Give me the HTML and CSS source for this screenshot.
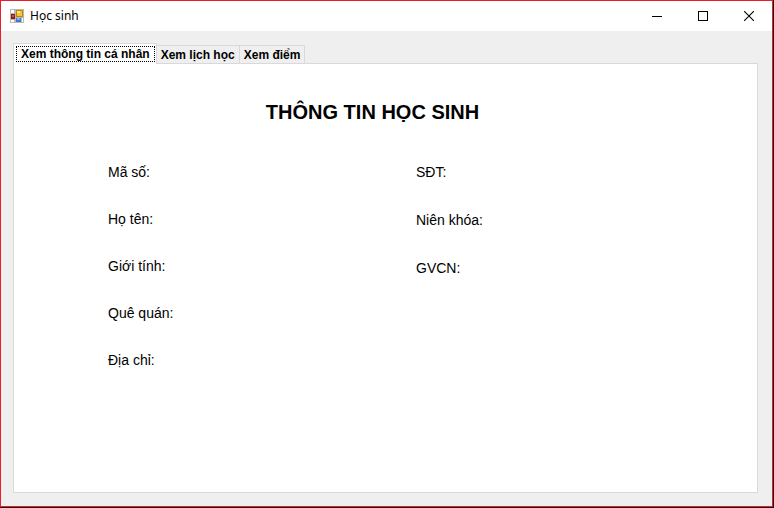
FILE: index.html
```html
<!DOCTYPE html>
<html lang="vi">
<head>
<meta charset="utf-8">
<title>Học sinh</title>
<link rel="stylesheet" href="styles.css">
</head>
<body>
<div class="window">
  <header class="titlebar">
    <svg class="app-icon" width="14" height="14" viewBox="0 0 14 14" shape-rendering="crispEdges" aria-hidden="true">
      <path fill="#b8b8b8" d="M0 0h14v14H0z"/>
      <path fill="#fff" d="M1 1h3v3H1zM1 11h3v2H1zM12 9h1v4h-1z"/>
      <path fill="#8f1c12" d="M1 5h4v5H1z"/>
      <path fill="#d8503c" d="M2 6h2v2H2z"/>
      <path fill="#b8860b" d="M6 1h7v7H6z"/>
      <path fill="#f7c52e" d="M7 2h5v5H7z"/>
      <path fill="#fde58a" d="M7 2h3v2H7z"/>
      <path fill="#3f78d0" d="M6 9h5v4H6z"/>
      <path fill="#7fb0f0" d="M7 9h3v2H7z"/>
    </svg>
    <h1 class="title">Học sinh</h1>
    <div class="controls">
      <button class="control" type="button" aria-label="Thu nhỏ">
        <svg width="10" height="10" viewBox="0 0 10 10" shape-rendering="crispEdges"><path d="M0 5h10v1H0z"/></svg>
      </button>
      <button class="control" type="button" aria-label="Phóng to">
        <svg width="10" height="10" viewBox="0 0 10 10" shape-rendering="crispEdges"><path fill-rule="evenodd" d="M0 0h10v10H0zM1 1v8h8V1z"/></svg>
      </button>
      <button class="control" type="button" aria-label="Đóng">
        <svg width="10" height="10" viewBox="0 0 10 10"><path d="M0 0l10 10M10 0L0 10" stroke="#000" stroke-width="1.1"/></svg>
      </button>
    </div>
  </header>
  <main class="client">
    <div class="tabs" role="tablist">
      <button class="tab tab-active" type="button" role="tab" aria-selected="true"><span class="focus">Xem thông tin cá nhân</span></button>
      <button class="tab" type="button" role="tab" aria-selected="false">Xem lịch học</button>
      <button class="tab" type="button" role="tab" aria-selected="false">Xem điểm</button>
    </div>
    <section class="panel" role="tabpanel">
      <h2 class="heading">THÔNG TIN HỌC SINH</h2>
      <div class="fields">
        <div class="column">
          <span>Mã số:</span>
          <span>Họ tên:</span>
          <span>Giới tính:</span>
          <span>Quê quán:</span>
          <span>Địa chỉ:</span>
        </div>
        <div class="column column-right">
          <span>SĐT:</span>
          <span>Niên khóa:</span>
          <span>GVCN:</span>
        </div>
      </div>
    </section>
  </main>
</div>
</body>
</html>
```
FILE: styles.css
```css
* {
  box-sizing: border-box;
}

body {
  margin: 0;
  padding: 0 1px 1px 0;
  height: 100vh;
  background: #1c1216;
  color: #000;
  font-family: "Liberation Sans", Arial, sans-serif;
}

.window {
  display: flex;
  flex-direction: column;
  height: 100%;
  border: 1px solid #e81e2f;
  background: #efefef;
}

.titlebar {
  display: flex;
  align-items: center;
  height: 30px;
  padding-left: 9px;
  background: #fff;
}

.title {
  margin: 0 0 0 6px;
  font: 12px/16px "Noto Sans", sans-serif;
}

.controls {
  display: flex;
  margin-left: auto;
}

.control {
  display: grid;
  place-items: center;
  width: 46px;
  height: 30px;
  padding: 0;
  border: 0;
  background: transparent;
}

.client {
  display: flex;
  flex: 1;
  flex-direction: column;
  padding: 12px 14px 13px 12px;
}

.tabs {
  display: flex;
  align-items: flex-end;
}

.tab {
  height: 18px;
  padding: 0 4px;
  border: 1px solid #d9d9d9;
  border-width: 1px 1px 0 0;
  background: #efefef;
  color: #000;
  font: bold 12px/16px "Liberation Sans", Arial, sans-serif;
  white-space: nowrap;
}

.tab-active {
  height: 21px;
  margin-bottom: -1px;
  padding: 0 1px 0 2px;
  border-left-width: 1px;
  background: #fff;
  z-index: 1;
}

.focus {
  display: block;
  padding: 0 4px;
  border: 1px dotted #000;
  line-height: 14px;
}

.panel {
  flex: 1;
  border: 1px solid #d9d9d9;
  background: #fff;
}

.heading {
  margin: 36px 26px 0 0;
  font-size: 20px;
  line-height: 24px;
  text-align: center;
}

.fields {
  display: grid;
  grid-template-columns: 308px 1fr;
  padding: 40px 0 0 94px;
  font-size: 14px;
  line-height: 16px;
}

.column {
  display: flex;
  flex-direction: column;
  gap: 31px;
}

.column-right {
  gap: 32px;
}
```
